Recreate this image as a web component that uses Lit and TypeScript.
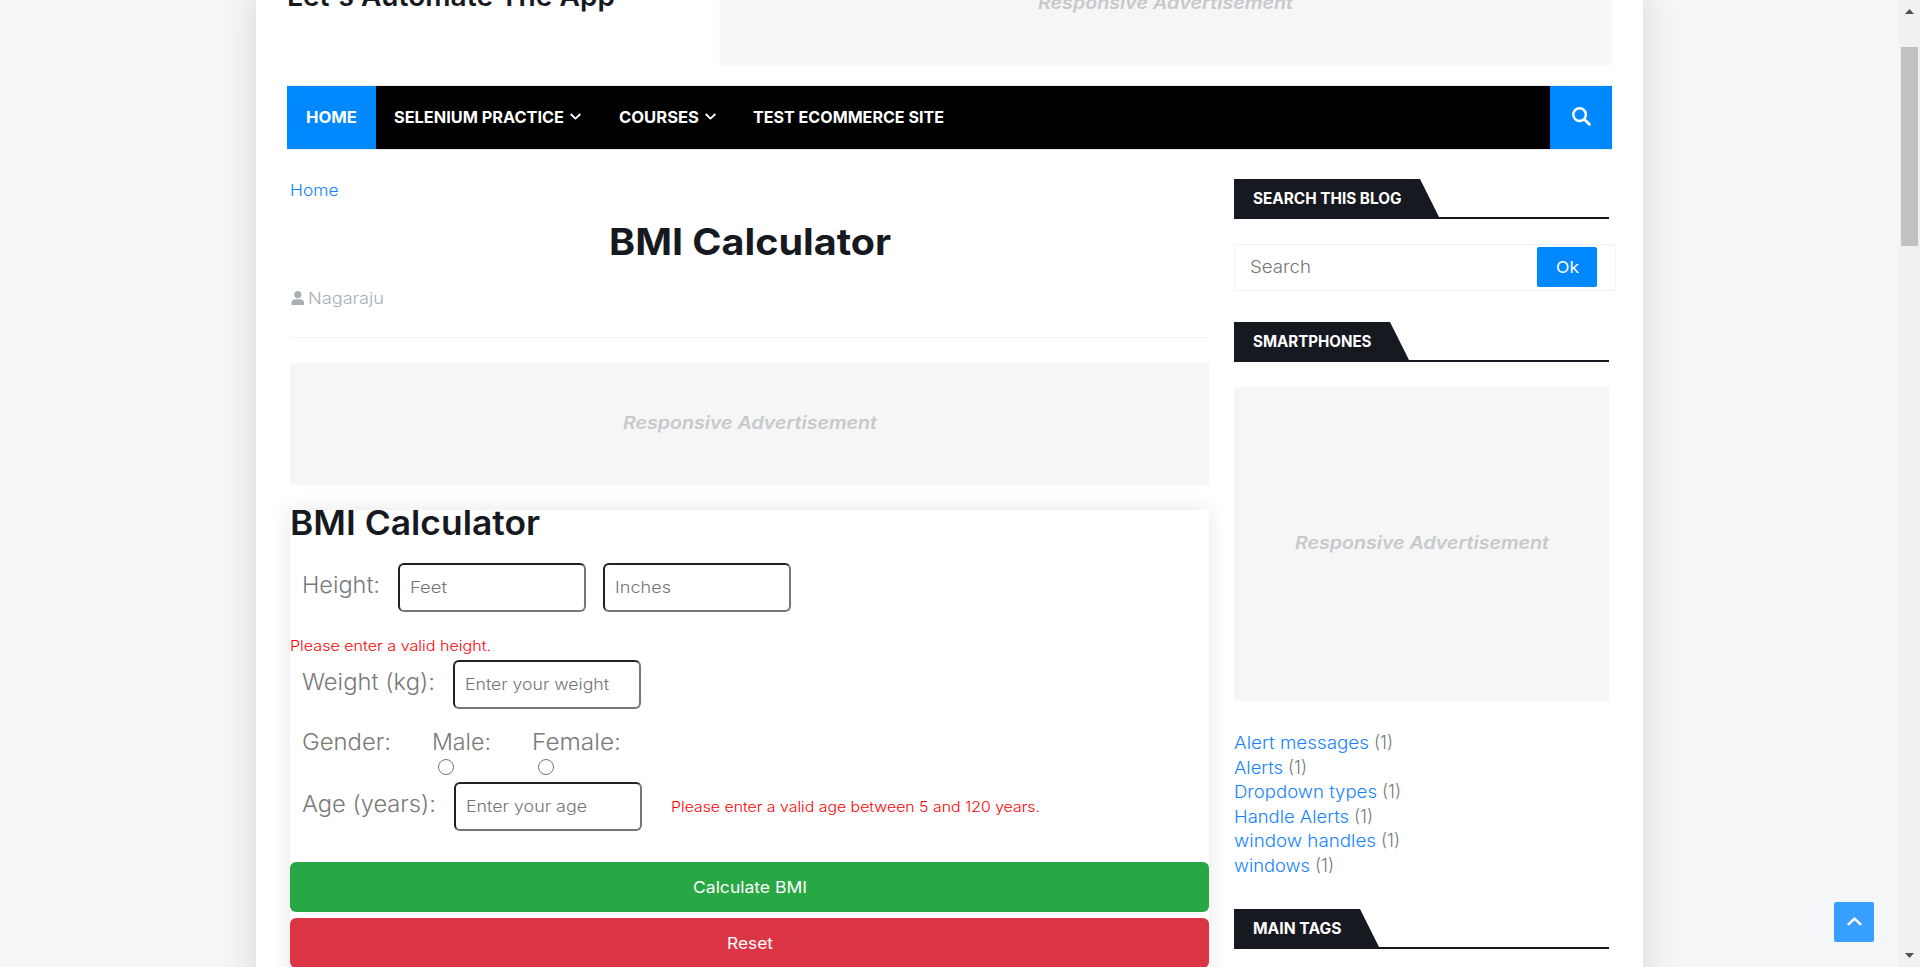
import { LitElement, html, css, svg } from "lit";
import { customElement } from "lit/decorators.js";

const ink = (text: string, width: number, cls = "") =>
  html`<span class="t ${cls}" data-w=${width}><span class="glyphs">${text}</span></span>`;

const field = (hint: string, width: number) =>
  html`<div class="box" role="textbox" aria-label=${hint}>${ink(hint, width)}</div>`;

const chevron = (cls: string) => html`<svg class=${cls} viewBox="0 0 10 6" fill="none">
  ${svg`<path d="M0.6 0.7L5 4.9L9.4 0.7" stroke="currentColor" stroke-width="1.7" stroke-linejoin="round"/>`}
</svg>`;

const labels: [string, number][] = [
  ["Alert messages", 135],
  ["Alerts", 49],
  ["Dropdown types", 143],
  ["Handle Alerts", 115],
  ["window handles", 142],
  ["windows", 76],
];

@customElement("app-root")
export class AppRoot extends LitElement {
  static styles = css`
    :host {
      display: block;
      height: 967px;
      overflow: hidden;
      position: relative;
      background: #f5f6f8;
      font-family: Inter, "Open Sans", sans-serif;
      font-weight: 350;
      font-size: 16px;
      color: #7a7a7a;
    }
    * { box-sizing: border-box; }
    svg { display: block; flex: none; }
    .t { display: inline-block; white-space: nowrap; flex: none; text-align: left; }
    .glyphs { display: inline-block; transform-origin: 0 50%; }
    .frame { display: flex; height: 967px; }
    .desk { flex: 1; overflow: hidden; padding-left: 256px; }
    .page {
      display: flow-root;
      width: 1387px;
      height: 1040px;
      background: #fff;
      padding: 0 31px;
      box-shadow: 0 0 30px 5px rgba(0, 0, 0, 0.1);
    }
    .header { display: flex; justify-content: space-between; height: 121px; margin-top: -57px; }
    .tagline { margin: 33px 0 0; line-height: 40px; font-size: 28px; font-weight: 560; color: #171921; }
    .ad {
      display: flex;
      align-items: center;
      justify-content: center;
      background: #f5f6f8;
      box-shadow: 0 1px 2px rgba(0, 0, 0, 0.04);
      font-size: 17.5px;
      font-weight: 600;
      font-style: italic;
      color: #c8c9ca;
    }
    .header .ad { width: 892px; padding: 0 2px 2px 0; }
    .nav {
      display: flex;
      height: 63px;
      margin-top: 22px;
      background: #000;
      box-shadow: 0 0 0 1px #ebebeb;
      clip-path: inset(-1px 0);
      color: #fff;
      font-size: 16.5px;
      font-weight: 650;
    }
    .nav > div { display: flex; align-items: center; padding-bottom: 1px; }
    .nav > .home { width: 89px; padding-left: 19px; background: #08f; }
    .nav > .item { padding-left: 18px; }
    .nav > .courses { padding-left: 38px; }
    .nav > .shop { padding-left: 37px; flex: 1; }
    .chev { width: 11px; height: 7px; margin: -1px 0 0 6px; }
    .nav > .find { width: 62px; padding: 0 0 3px 22px; background: #08f; }
    .find svg { width: 19px; height: 19px; }
    .columns { display: flex; justify-content: space-between; padding: 0 3px; }
    .main { width: 919px; padding-top: 29px; }
    .crumb { display: block; height: 24px; line-height: 24px; color: #1583ff; }
    h1 {
      margin: 15px 0 0;
      line-height: 50px;
      height: 50px;
      text-align: center;
      font-size: 37px;
      font-weight: 720;
      color: #171921;
    }
    .author {
      display: flex;
      align-items: center;
      height: 24px;
      gap: 3px;
      padding-left: 1px;
      color: #a5b0b7;
      font-size: 16px;
    }
    .meta { padding-top: 19px; height: 71px; border-bottom: 1px solid #f2f3f4; margin-bottom: 25px; }
    .author svg { width: 14px; height: 14px; }
    .main .ad { height: 121px; margin-bottom: 26px; padding-bottom: 3px; }
    .calc { display: flow-root; height: 480px; background: #fff; box-shadow: 0 0 20px rgba(0, 0, 0, 0.1); }
    h2 { margin: 0; height: 26px; line-height: 27px; font-size: 33.5px; font-weight: 600; color: #171921; }
    .row { display: flex; align-items: center; height: 49px; padding-left: 12px; font-size: 23px; }
    .row > .t { line-height: 45px; margin-top: -4px; }
    .height { margin-top: 27px; }
    .box {
      display: flex;
      align-items: center;
      height: 49px;
      width: 188px;
      margin-left: 18px;
      padding: 0 10px 2px;
      background: #fff;
      border: 2px solid #767676;
      border-top-color: #212121;
      border-left-color: #212121;
      border-radius: 6px;
      font-size: 16px;
      color: #757575;
    }
    .box + .box { margin-left: 17px; }
    .error { color: #f00; font-size: 14px; line-height: 20px; }
    .first { margin-top: 23px; height: 25px; line-height: 20px; }
    .row > .error { margin: 0 0 0 29px; line-height: 20px; }
    .genders { display: flex; height: 73px; padding: 21px 0 0 12px; font-size: 23px; line-height: 24px; }
    .genders label { display: flex; flex-direction: column; margin-left: 41px; }
    .genders input { width: 16px; height: 16px; margin: 5px 0 0 6px; }
    .action {
      display: flex;
      align-items: center;
      justify-content: center;
      width: 100%;
      height: 50px;
      border: 0;
      border-radius: 6px;
      color: #fff;
      font: 430 16px Inter, "Open Sans", sans-serif;
    }
    .go { background: #28a745; margin: 31px 0 6px; }
    .reset { background: #dc3545; }
    .side { width: 375px; padding-top: 30px; }
    .head { height: 40px; border-bottom: 2px solid #171921; display: flex; }
    .tab {
      height: 38px;
      padding: 1px 38px 0 18.5px;
      line-height: 37px;
      background: #171921;
      color: #fff;
      font-size: 15.5px;
      font-weight: 650;
      clip-path: polygon(0 0, calc(100% - 19px) 0, 100% 100%, 0 100%);
    }
    .searchbar { display: flex; justify-content: space-between; width: 382px; height: 47px; margin: 25px 0 31px; padding: 2px 18px 0 15px; border: 1px solid #f2f3f4; }
    .search { height: 41px; line-height: 40px; font-size: 17px; color: #757575; }
    .ok { width: 60px; height: 40px; border: 0; border-radius: 2px; padding: 0; background: #08f; color: #fff; font: 400 16.5px Inter, "Open Sans", sans-serif; }
    .side .ad { height: 313px; margin: 25px 0 31px; padding-bottom: 3px; }
    .labels { list-style: none; margin: 0 0 31px; padding: 0; }
    .labels li { display: flex; gap: 5px; height: 24.5px; line-height: 24.5px; font-size: 17px; }
    .labels a { color: #1583ff; }
    .labels .count { font-size: 18px; }
    .scrollbar { width: 21px; background: #f1f1f1; display: flex; flex-direction: column; align-items: center; padding: 9px 0 9px; }
    .thumb { width: 17px; height: 199px; margin: 33px 0 auto; background: #c1c1c1; }
    .arrow { width: 9px; height: 5px; fill: #505050; }
    .top {
      position: absolute;
      left: 1834px;
      top: 902px;
      width: 40px;
      height: 40px;
      border-radius: 2px;
      background: #369fff;
      color: #fff;
      display: flex;
      align-items: center;
      justify-content: center;
    }
    .up { width: 15px; height: 9px; transform: rotate(180deg); margin-top: -2px; }
  `;

  firstUpdated() {
    this.renderRoot.querySelectorAll<HTMLElement>(".t").forEach((el) => {
      const glyphs = el.firstElementChild as HTMLElement;
      const want = Number(el.dataset.w);
      const natural = glyphs.getBoundingClientRect().width;
      el.style.width = `${want}px`;
      glyphs.style.transform = `scaleX(${(want / natural).toFixed(4)})`;
    });
  }

  private heading(text: string, width: number) {
    return html`<div class="head"><div class="tab">${ink(text, width)}</div></div>`;
  }

  render() {
    return html`
      <div class="frame">
        <div class="desk">
          <div class="page">
            <header class="header">
              <div class="tagline">${ink("Let's Automate The App", 328)}</div>
              <div class="ad">${ink("Responsive Advertisement", 255)}</div>
            </header>
            <nav class="nav">
              <div class="home">${ink("HOME", 51)}</div>
              <div class="item">${ink("SELENIUM PRACTICE", 170)}${chevron("chev")}</div>
              <div class="item courses">${ink("COURSES", 80)}${chevron("chev")}</div>
              <div class="item shop">${ink("TEST ECOMMERCE SITE", 191)}</div>
              <div class="find">
                <svg viewBox="0 0 19 19" fill="none" stroke="#fff">
                  <circle cx="7.6" cy="7.6" r="6.3" stroke-width="2.5" />
                  <path d="M12.3 12.3L17.3 17.2" stroke-width="2.8" stroke-linecap="round" />
                </svg>
              </div>
            </nav>
            <div class="columns">
              <main class="main">
                <a class="crumb">${ink("Home", 48.5)}</a>
                <h1>${ink("BMI Calculator", 282)}</h1>
                <div class="meta">
                  <div class="author">
                    <svg viewBox="0 0 14 14" fill="currentColor">
                      <circle cx="6.8" cy="3.6" r="3.6" />
                      <path d="M0.5 14V12.2Q0.5 8.2 4.5 8.2H9Q13 8.2 13 12.2V14Z" />
                    </svg>
                    ${ink("Nagaraju", 76)}
                  </div>
                </div>
                <div class="ad">${ink("Responsive Advertisement", 254)}</div>
                <section class="calc">
                  <h2>${ink("BMI Calculator", 250)}</h2>
                  <div class="row height">
                    ${ink("Height:", 78)}
                    ${field("Feet", 37)}
                    ${field("Inches", 56)}
                  </div>
                  <div class="first">${ink("Please enter a valid height.", 201, "error")}</div>
                  <div class="row">
                    ${ink("Weight (kg):", 133)}
                    ${field("Enter your weight", 144)}
                  </div>
                  <div class="genders">
                    ${ink("Gender:", 89)}
                    <label>${ink("Male:", 59)}<input type="radio" name="gender" /></label>
                    <label>${ink("Female:", 89)}<input type="radio" name="gender" /></label>
                  </div>
                  <div class="row">
                    ${ink("Age (years):", 134)}
                    ${field("Enter your age", 121)}
                    ${ink("Please enter a valid age between 5 and 120 years.", 369, "error")}
                  </div>
                  <button class="action go">${ink("Calculate BMI", 114)}</button>
                  <button class="action reset">${ink("Reset", 46)}</button>
                </section>
              </main>
              <aside class="side">
                ${this.heading("SEARCH THIS BLOG", 148.5)}
                <div class="searchbar">
                  <div class="search" role="searchbox" aria-label="Search">${ink("Search", 61)}</div>
                  <button class="ok">${ink("Ok", 23)}</button>
                </div>
                ${this.heading("SMARTPHONES", 118.5)}
                <div class="ad">${ink("Responsive Advertisement", 254)}</div>
                <ul class="labels">
                  ${labels.map(
                    ([name, w]) => html`<li><a>${ink(name, w)}</a>${ink("(1)", 19, "count")}</li>`
                  )}
                </ul>
                ${this.heading("MAIN TAGS", 88.5)}
              </aside>
            </div>
          </div>
        </div>
        <div class="scrollbar">
          <svg class="arrow" viewBox="0 0 9 5"><path d="M4.5 0L9 5H0Z" /></svg>
          <div class="thumb"></div>
          <svg class="arrow" viewBox="0 0 9 5"><path d="M0 0H9L4.5 5Z" /></svg>
        </div>
      </div>
      <div class="top">${chevron("up")}</div>
    `;
  }
}
